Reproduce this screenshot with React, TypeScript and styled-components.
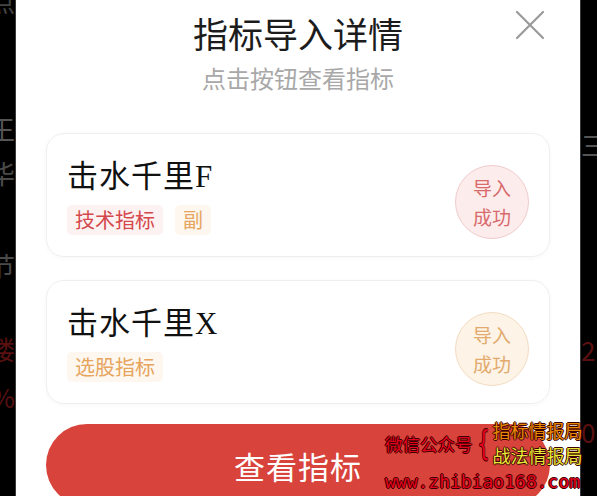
import styled, { createGlobalStyle } from "styled-components";

const GlobalStyle = createGlobalStyle`
  html, body {
    margin: 0;
    padding: 0;
    background: #000;
  }
  body {
    font-family: "Noto Sans CJK SC", "Noto Sans", sans-serif;
  }
`

const Screen = styled.div`
  position: relative;
  display: flex;
  width: 597px;
  height: 496px;
  overflow: hidden;
  background: #000;
`

const Strip = styled.div<{ $width: number; $align: string }>`
  width: ${({ $width }) => $width}px;
  flex-shrink: 0;
  overflow: hidden;
  display: flex;
  flex-direction: column;
  align-items: ${({ $align }) => $align};
  border-${({ $align }) => ($align === "flex-end" ? "right" : "left")}: 1px solid #3a3a3a;
`

const Ghost = styled.span<{ $top: number; $color: string }>`
  display: block;
  margin-top: ${({ $top }) => $top}px;
  font-size: 26px;
  line-height: 30px;
  color: ${({ $color }) => $color};
  white-space: nowrap;
`

const Modal = styled.div`
  flex: 1;
  background: #fff;
  display: flex;
  flex-direction: column;
  padding: 0 30px;
`

const Header = styled.div`
  position: relative;
  display: flex;
  flex-direction: column;
  align-items: center;
  padding-top: 13px;
`

const Title = styled.h1`
  margin: 0;
  font-size: 35px;
  line-height: 40px;
  font-weight: 400;
  color: #1c1c1c;
`

const Subtitle = styled.p`
  margin: 10px 0 0;
  font-size: 24px;
  line-height: 30px;
  color: #a8a8a8;
`

const Close = styled.button`
  position: absolute;
  top: 9px;
  right: 4px;
  width: 32px;
  height: 32px;
  padding: 0;
  border: none;
  background: none;
  cursor: pointer;
`

const List = styled.div`
  display: flex;
  flex-direction: column;
  gap: 23px;
  margin-top: 40px;
`

const Card = styled.div`
  display: flex;
  align-items: center;
  justify-content: space-between;
  padding: 23px 20px 21px;
  border: 1px solid #efefef;
  border-radius: 18px;
  box-shadow: 0 1px 4px rgba(0, 0, 0, 0.035);
`

const Info = styled.div`
  display: flex;
  flex-direction: column;
  gap: 9px;
`

const Name = styled.div`
  height: 38px;
  font-family: "Liberation Serif", "Noto Sans CJK SC", serif;
  font-size: 31px;
  line-height: 38px;
  letter-spacing: 1px;
  color: #111;
`

const Tags = styled.div`
  display: flex;
  gap: 12px;
`

const tones = {
  red: { text: "#d4484c", bg: "#fdf2f2", border: "#f1cbcb", badge: "#fcecec", badgeText: "#d96a6b" },
  orange: { text: "#e6a45d", bg: "#fdf7f0", border: "#f3dcc2", badge: "#fdf3e7", badgeText: "#e2aa6c" },
}

type Tone = keyof typeof tones

const Tag = styled.span<{ $tone: Tone }>`
  padding: 0 8px;
  height: 30px;
  line-height: 30px;
  border-radius: 5px;
  font-size: 20px;
  color: ${({ $tone }) => tones[$tone].text};
  background: ${({ $tone }) => tones[$tone].bg};
`

const Badge = styled.div<{ $tone: Tone }>`
  width: 72px;
  height: 72px;
  margin: 8px 0 -4px;
  flex-shrink: 0;
  border-radius: 50%;
  display: flex;
  align-items: center;
  justify-content: center;
  text-align: center;
  font-size: 19px;
  line-height: 29px;
  color: ${({ $tone }) => tones[$tone].badgeText};
  background: ${({ $tone }) => tones[$tone].badge};
  border: 1px solid ${({ $tone }) => tones[$tone].border};
`

const ViewButton = styled.button`
  margin-top: 20px;
  flex-shrink: 0;
  height: 82px;
  border: none;
  border-radius: 41px;
  background: #d8433b;
  color: #fff;
  font-family: "Noto Sans CJK SC", sans-serif;
  font-size: 31px;
  letter-spacing: 1px;
  cursor: pointer;
`

const Watermark = styled.div`
  position: absolute;
  left: 385px;
  top: 418px;
  display: grid;
  grid-template-columns: auto 20px auto;
  align-items: center;
  font-family: "Noto Sans CJK SC", sans-serif;
  text-shadow: -1px 0 #3a0000, 1px 0 #3a0000, 0 -1px #3a0000, 0 1px #3a0000;
`

const MarkText = styled.span<{ $color: string; $size: number }>`
  font-size: ${({ $size }) => $size}px;
  line-height: 25px;
  color: ${({ $color }) => $color};
  white-space: nowrap;
`

const Brace = styled.span`
  font-family: "DejaVu Sans", sans-serif;
  font-size: 34px;
  line-height: 44px;
  text-align: center;
  transform: scaleX(0.6);
  color: #e4001c;
`

const Stack = styled.div`
  display: flex;
  flex-direction: column;
`

const Url = styled.div`
  grid-column: 1 / 4;
  margin-top: 2px;
  font-family: "DejaVu Sans Mono", monospace;
  font-size: 18px;
  line-height: 24px;
  color: #e4001c;
  text-shadow: -1px 0 #3a0000, 1px 0 #3a0000, 0 -1px #3a0000, 0 1px #3a0000;
`

const items: { name: string; tags: { label: string; tone: Tone }[]; tone: Tone }[] = [
  { name: "击水千里F", tags: [{ label: "技术指标", tone: "red" }, { label: "副", tone: "orange" }], tone: "red" },
  { name: "击水千里X", tags: [{ label: "选股指标", tone: "orange" }], tone: "orange" },
]

export default function App() {
  return (
    <Screen>
      <GlobalStyle />
      <Strip $width={15} $align="flex-end">
        <Ghost $top={-14} $color="#444">点</Ghost>
        <Ghost $top={98} $color="#555">王</Ghost>
        <Ghost $top={14} $color="#4a4a4a">华</Ghost>
        <Ghost $top={62} $color="#4a4a4a">节</Ghost>
        <Ghost $top={54} $color="#5a1010">楼</Ghost>
        <Ghost $top={18} $color="#5a1010">%</Ghost>
      </Strip>
      <Modal>
        <Header>
          <Title>指标导入详情</Title>
          <Subtitle>点击按钮查看指标</Subtitle>
          <Close aria-label="关闭">
            <svg width="32" height="32" viewBox="0 0 32 32">
              <path d="M3 3L29 29M29 3L3 29" stroke="#9a9a9a" strokeWidth="2.2" strokeLinecap="round" />
            </svg>
          </Close>
        </Header>
        <List>
          {items.map((item) => (
            <Card key={item.name}>
              <Info>
                <Name>{item.name}</Name>
                <Tags>
                  {item.tags.map((t) => (
                    <Tag key={t.label} $tone={t.tone}>{t.label}</Tag>
                  ))}
                </Tags>
              </Info>
              <Badge $tone={item.tone}>
                导入
                <br />
                成功
              </Badge>
            </Card>
          ))}
        </List>
        <ViewButton>查看指标</ViewButton>
      </Modal>
      <Strip $width={16} $align="flex-start">
        <Ghost $top={130} $color="#555">三</Ghost>
        <Ghost $top={175} $color="#5a1010">2</Ghost>
        <Ghost $top={52} $color="#5a1010">0</Ghost>
      </Strip>
      <Watermark>
        <MarkText $color="#e4001c" $size={17.5}>微信公众号</MarkText>
        <Brace>{"{"}</Brace>
        <Stack>
          <MarkText $color="#e88a00" $size={18}>指标情报局</MarkText>
          <MarkText $color="#e8e838" $size={18}>战法情报局</MarkText>
        </Stack>
        <Url>www.zhibiao168.com</Url>
      </Watermark>
    </Screen>
  )
}
